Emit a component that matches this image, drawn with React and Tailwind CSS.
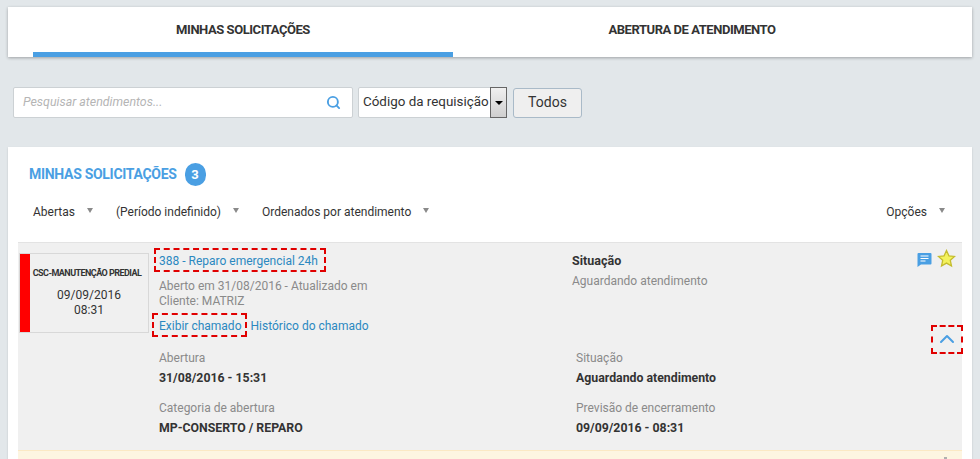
import React from 'react';
import { Search, ChevronUp } from 'lucide-react';

const Caret = () => (
  <span className="w-0 h-0 border-l-[3px] border-r-[3px] border-t-[5px] border-l-transparent border-r-transparent border-t-[#8a8a8a] mb-1" />
);

const Filter = ({ label, className }) => (
  <div className={`flex items-center gap-[12px] ${className}`}>
    <span>{label}</span>
    <Caret />
  </div>
);

const Detail = ({ label, value }) => (
  <div>
    <div className="text-[#8a8a8a] leading-[17px]">{label}</div>
    <div className="font-bold text-[12.3px] text-[#333] leading-[17px] mt-[3px]">{value}</div>
  </div>
);

export default function App() {
  return (
    <div className="h-[459px] overflow-hidden bg-[#e2e7ea] px-2 pt-[7px] text-[12px] text-[#333] font-['Roboto',sans-serif]">
      {/* Tabs */}
      <div className="flex h-[50px] bg-white shadow-[0_1px_3px_rgba(0,0,0,0.3)] px-[25px]">
        <div className="w-[420px] flex items-center justify-center border-b-[5px] border-[#4a9fe3] font-bold text-[13px] text-[#333] tracking-[-0.45px]">
          MINHAS SOLICITAÇÕES
        </div>
        <div className="w-[478px] flex items-center justify-center pb-[5px] font-bold text-[13px] text-[#333] tracking-[-0.45px]">
          ABERTURA DE ATENDIMENTO
        </div>
      </div>

      {/* Busca */}
      <div className="flex items-center mt-[30px] ml-[5px] h-[31px]">
        <div className="w-[340px] h-[31px] flex items-center justify-between bg-white border border-[#ccd1d4] rounded-[2px] pl-[9px] pr-[11px]">
          <span className="italic text-[12.4px] text-[#b5b5b5]">Pesquisar atendimentos...</span>
          <Search size={15} strokeWidth={3} className="text-[#4a9fe3]" />
        </div>
        <div className="w-[149px] h-[31px] ml-[5px] flex items-center justify-between bg-white border border-[#ccd1d4] rounded-[2px] pl-1 text-[13.4px]">
          <span className="whitespace-nowrap">Código da requisição</span>
          <span className="w-[17px] h-[31px] -mr-px shrink-0 flex items-center justify-center bg-gradient-to-b from-[#f0f0f0] to-[#cfcfcf] border border-[#666]">
            <span className="w-0 h-0 border-l-[4px] border-r-[4px] border-t-[4px] border-l-transparent border-r-transparent border-t-black" />
          </span>
        </div>
        <button className="w-[69px] h-[30px] ml-[6px] bg-[#efefef] border border-[#a9bac8] rounded-[3px] text-[14px]">
          Todos
        </button>
      </div>

      {/* Lista */}
      <div className="mt-[29px] bg-white shadow-[0_1px_2px_rgba(0,0,0,0.15)] px-[10px] h-[320px]">
        <div className="flex items-center pt-4 pl-[11px] h-[39px]">
          <span className="font-bold text-[#4a9fe3] text-[14px] tracking-[-0.3px]">MINHAS SOLICITAÇÕES</span>
          <span className="ml-2 w-[21px] h-[23px] rounded-full bg-[#4a9fe3] text-white font-bold text-[13px] flex items-center justify-center">3</span>
        </div>

        <div className="flex items-center mt-[17px] pl-[15px] pr-[17px] h-[18px]">
          <Filter label="Abertas" />
          <Filter label="(Período indefinido)" className="ml-[23px]" />
          <Filter label="Ordenados por atendimento" className="ml-[23px]" />
          <Filter label="Opções" className="ml-auto" />
        </div>

        {/* Chamado */}
        <div className="mt-[21px] bg-[#f0f0f0] border-t border-[#e3e3e3] h-[208px] relative">
          <div className="flex">
            <div className="w-[130px] h-[80px] ml-px mt-[10px] flex border border-[#d8d8d8]">
              <div className="w-[10px] bg-[#ff0000]" />
              <div className="flex-1 text-center">
                <div className="mt-[13px] pr-[4px] text-[9px] font-bold tracking-[-0.55px] whitespace-nowrap">CSC-MANUTENÇÃO PREDIAL</div>
                <div className="mt-[7px] leading-[15px]">09/09/2016</div>
                <div className="leading-[15px]">08:31</div>
              </div>
            </div>

            <div className="w-[413px] ml-[10px]">
              <div className="mt-[10px] leading-[17px] text-[#2b88c0]">388 - Reparo emergencial 24h</div>
              <div className="mt-[9px] leading-[15px] text-[#8a8a8a]">Aberto em 31/08/2016 - Atualizado em</div>
              <div className="leading-[15px] text-[#8a8a8a]">Cliente: MATRIZ</div>
              <div className="mt-[9px] leading-[17px] text-[#2b88c0] flex gap-[9px]">
                <span>Exibir chamado</span>
                <span>Histórico do chamado</span>
              </div>
            </div>

            <div className="mt-[9px]">
              <div className="font-bold text-[12.5px] leading-[17px]">Situação</div>
              <div className="mt-[4px] leading-[17px] text-[#8a8a8a]">Aguardando atendimento</div>
            </div>
          </div>

          <div className="grid grid-cols-[417px_1fr] gap-y-[13px] ml-[141px] mt-[15px]">
            <Detail label="Abertura" value="31/08/2016 - 15:31" />
            <Detail label="Situação" value="Aguardando atendimento" />
            <Detail label="Categoria de abertura" value="MP-CONSERTO / REPARO" />
            <Detail label="Previsão de encerramento" value="09/09/2016 - 08:31" />
          </div>

          {/* Ícones */}
          <div className="absolute right-[6px] top-[6px] flex items-center gap-[5px]">
            <svg width="15" height="16" viewBox="0 0 15 16" className="mt-[2px]">
              <path d="M1.5 1h12a1 1 0 0 1 1 1v9.500a1 1 0 0 1-1 1H4L.5 15V2a1 1 0 0 1 1-1z" fill="#4a9fe3" />
              <path d="M3.500 3.500h8v1h-8zM3.500 6h8v1h-8zM3.500 8.500h5v1h-5z" fill="#fff" />
            </svg>
            <svg width="19" height="19" viewBox="0 0 19 19">
              <path d="M9.5 1.5l2.4 5.3 5.700.6-4.300 3.900 1.200 5.700-5-2.900-5 2.900 1.200-5.700L1.400 7.400l5.700-.6z" fill="#f3f25c" stroke="#c4bc2e" strokeWidth="1.3" />
            </svg>
          </div>
          <ChevronUp size={24} strokeWidth={2} className="absolute right-[3px] top-[84px] text-[#4a9fe3]" />

          {/* Marcações */}
          <div className="absolute left-[136px] top-[5px] w-[172px] h-[24px] border-2 border-dashed border-[#e00000]" />
          <div className="absolute left-[134px] top-[70px] w-[95px] h-[24px] border-2 border-dashed border-[#e00000]" />
          <div className="absolute right-[-1px] top-[82px] w-[32px] h-[29px] border-2 border-dashed border-[#e00000]" />
        </div>

        <div className="bg-[#fdf5e1] border-t border-[#fbe9c4] h-[20px] relative">
          <span className="absolute right-[15px] top-[6px] w-[3px] h-[3px] bg-[#b0b0b0]" />
        </div>
      </div>
    </div>
  );
}
